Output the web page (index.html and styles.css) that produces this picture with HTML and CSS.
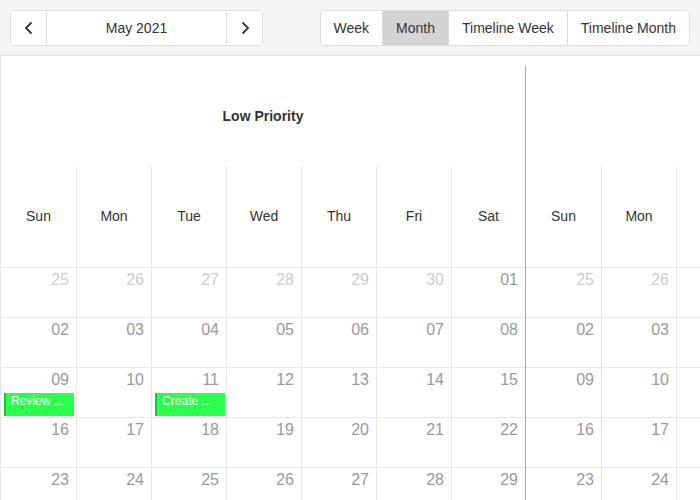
FILE: index.html
```html
<!DOCTYPE html>
<html>
<head>
<meta charset="utf-8">
<link rel="stylesheet" href="styles.css">
</head>
<body>
<div class="toolbar">
  <div class="btn-group">
    <button class="btn icon" aria-label="Previous"><svg width="14" height="14" viewBox="0 0 14 14"><path d="M9.5 1.5 L4 7 L9.5 12.5" fill="none" stroke="#333" stroke-width="1.8"/></svg></button>
    <button class="btn label">May 2021</button>
    <button class="btn icon" aria-label="Next"><svg width="14" height="14" viewBox="0 0 14 14"><path d="M4.5 1.5 L10 7 L4.5 12.5" fill="none" stroke="#333" stroke-width="1.8"/></svg></button>
  </div>
  <div class="btn-group">
    <button class="btn view">Week</button>
    <button class="btn view active">Month</button>
    <button class="btn view">Timeline Week</button>
    <button class="btn view">Timeline Month</button>
  </div>
</div>
<div class="calendar">
  <div class="group g1">
    <div class="group-head">Low Priority</div>
    <div class="row days">
      <div class="cell">Sun</div><div class="cell">Mon</div><div class="cell">Tue</div><div class="cell">Wed</div><div class="cell">Thu</div><div class="cell">Fri</div><div class="cell">Sat</div>
    </div>
    <div class="row week">
      <div class="cell"><div class="date other">25</div></div><div class="cell"><div class="date other">26</div></div><div class="cell"><div class="date other">27</div></div><div class="cell"><div class="date other">28</div></div><div class="cell"><div class="date other">29</div></div><div class="cell"><div class="date other">30</div></div><div class="cell"><div class="date">01</div></div>
    </div>
    <div class="row week">
      <div class="cell"><div class="date">02</div></div><div class="cell"><div class="date">03</div></div><div class="cell"><div class="date">04</div></div><div class="cell"><div class="date">05</div></div><div class="cell"><div class="date">06</div></div><div class="cell"><div class="date">07</div></div><div class="cell"><div class="date">08</div></div>
    </div>
    <div class="row week">
      <div class="cell"><div class="date">09</div><div class="event">Review ...</div></div><div class="cell"><div class="date">10</div></div><div class="cell"><div class="date">11</div><div class="event">Create ...</div></div><div class="cell"><div class="date">12</div></div><div class="cell"><div class="date">13</div></div><div class="cell"><div class="date">14</div></div><div class="cell"><div class="date">15</div></div>
    </div>
    <div class="row week">
      <div class="cell"><div class="date">16</div></div><div class="cell"><div class="date">17</div></div><div class="cell"><div class="date">18</div></div><div class="cell"><div class="date">19</div></div><div class="cell"><div class="date">20</div></div><div class="cell"><div class="date">21</div></div><div class="cell"><div class="date">22</div></div>
    </div>
    <div class="row week">
      <div class="cell"><div class="date">23</div></div><div class="cell"><div class="date">24</div></div><div class="cell"><div class="date">25</div></div><div class="cell"><div class="date">26</div></div><div class="cell"><div class="date">27</div></div><div class="cell"><div class="date">28</div></div><div class="cell"><div class="date">29</div></div>
    </div>
  </div>
  <div class="group g2">
    <div class="group-head"></div>
    <div class="row days">
      <div class="cell">Sun</div><div class="cell">Mon</div><div class="cell"></div>
    </div>
    <div class="row week">
      <div class="cell"><div class="date other">25</div></div><div class="cell"><div class="date other">26</div></div><div class="cell"></div>
    </div>
    <div class="row week">
      <div class="cell"><div class="date">02</div></div><div class="cell"><div class="date">03</div></div><div class="cell"></div>
    </div>
    <div class="row week">
      <div class="cell"><div class="date">09</div></div><div class="cell"><div class="date">10</div></div><div class="cell"></div>
    </div>
    <div class="row week">
      <div class="cell"><div class="date">16</div></div><div class="cell"><div class="date">17</div></div><div class="cell"></div>
    </div>
    <div class="row week">
      <div class="cell"><div class="date">23</div></div><div class="cell"><div class="date">24</div></div><div class="cell"></div>
    </div>
  </div>
</div>
</body>
</html>
```

FILE: styles.css
```css
html, body {
  margin: 0;
  padding: 0;
  width: 700px;
  height: 500px;
  overflow: hidden;
  background: #fff;
  font-family: "Liberation Sans", Arial, sans-serif;
  color: #333;
}

.toolbar {
  height: 56px;
  box-sizing: border-box;
  padding: 10px 10px 0 10px;
  background: #f5f5f5;
  border-bottom: 1px solid #e3e3e3;
  display: flex;
  justify-content: space-between;
  align-items: flex-start;
}

.btn-group {
  display: flex;
  height: 36px;
  box-sizing: border-box;
  border: 1px solid #ddd;
  border-radius: 4px;
  background: #fff;
  overflow: hidden;
}

.btn {
  font-family: inherit;
  font-size: 14px;
  color: #333;
  background: #fff;
  border: 0;
  border-left: 1px solid #ddd;
  margin: 0;
  padding: 0;
  height: 34px;
  display: flex;
  align-items: center;
  justify-content: center;
}

.btn:first-child {
  border-left: 0;
}

.btn.icon {
  width: 36px;
}

.btn.icon:first-child {
  width: 35px;
}

.btn.label {
  width: 180px;
}

.btn.view {
  padding: 0 13px;
}

.btn.active {
  background: #d4d4d4;
}

.calendar {
  display: flex;
  padding-top: 10px;
  border-left: 1px solid #e6e6e6;
  height: 444px;
  overflow: hidden;
}

.group {
  flex: none;
  display: flex;
  flex-direction: column;
}

.group > * {
  flex: none;
}

.g1 {
  width: 524px;
  border-right: 1px solid #a8a8a8;
}

.g2 {
  width: 225px;
}

.group-head {
  height: 100px;
  display: flex;
  align-items: center;
  justify-content: center;
  font-size: 14px;
  font-weight: bold;
  color: #333;
}

.row {
  display: grid;
  border-bottom: 1px solid #e6e6e6;
}

.g1 .row {
  grid-template-columns: 75px 75px 75px 75px 75px 75px 74px;
}

.g2 .row {
  grid-template-columns: 75px 75px 75px;
}

.cell {
  box-sizing: border-box;
  border-left: 1px solid #e6e6e6;
  min-width: 0;
}

.cell:first-child {
  border-left: 0;
}

.days {
  height: 101px;
}

.days .cell {
  display: flex;
  align-items: center;
  justify-content: center;
  font-size: 14px;
  color: #333;
  padding-bottom: 2px;
}

.week {
  height: 49px;
}

.date {
  text-align: right;
  font-size: 16px;
  line-height: 19px;
  padding: 2px 7px 0 0;
  color: #999;
}

.date.other {
  color: #ccc;
}

.event {
  margin: 4px 0 0 3px;
  width: 70px;
  height: 23px;
  box-sizing: border-box;
  background: #2bff4e;
  border-left: 2px solid #1cc53b;
  color: #fff;
  font-size: 12px;
  line-height: 15px;
  padding: 1px 0 0 5px;
  white-space: nowrap;
  overflow: hidden;
}
```
